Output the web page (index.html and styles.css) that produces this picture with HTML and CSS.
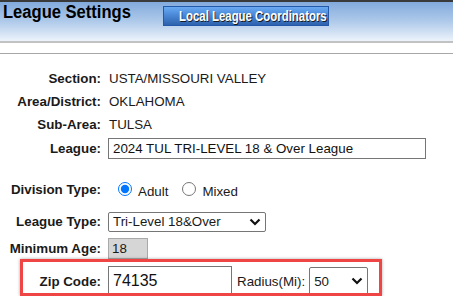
FILE: index.html
```html
<!DOCTYPE html>
<html lang="en">
<head>
<meta charset="utf-8">
<title>League Settings</title>
<link rel="stylesheet" href="styles.css">
</head>
<body>
<div class="topbar"></div>
<header class="header">
  <h1 class="title"><span class="narrow narrow-title">League Settings</span></h1>
  <button class="coord-btn" type="button"><span class="narrow">Local League Coordinators</span></button>
</header>
<div class="band"></div>
<div class="rule"></div>
<main class="form">
  <div class="info">
    <div class="label">Section:</div><div class="value">USTA/MISSOURI VALLEY</div>
    <div class="label">Area/District:</div><div class="value">OKLAHOMA</div>
    <div class="label">Sub-Area:</div><div class="value">TULSA</div>
    <div class="label label-league">League:</div>
    <div class="value value-league"><input class="league-input" type="text" value="2024 TUL TRI-LEVEL 18 &amp; Over League"></div>
  </div>
  <div class="opts">
    <div class="row row-division">
      <div class="label">Division Type:</div>
      <div class="radios">
        <label class="radio-opt"><input type="radio" name="div" checked><span>Adult</span></label>
        <label class="radio-opt"><input type="radio" name="div"><span>Mixed</span></label>
      </div>
    </div>
    <div class="row row-type">
      <div class="label">League Type:</div>
      <span class="select-wrap">
        <select class="type-select"><option>Tri-Level 18&amp;Over</option></select>
        <svg class="chev" width="12" height="8" viewBox="0 0 12 8"><path d="M1.5 1.5 L6 6 L10.5 1.5" fill="none" stroke="#111" stroke-width="2.2"/></svg>
      </span>
    </div>
    <div class="row row-age">
      <div class="label">Minimum Age:</div>
      <input class="age-input" type="text" value="18" readonly>
    </div>
    <div class="row row-zip">
      <div class="label">Zip Code:</div>
      <input class="zip-input" type="text" value="74135">
      <span class="radius-label">Radius(Mi):</span>
      <span class="select-wrap">
        <select class="radius-select"><option>50</option></select>
        <svg class="chev" width="12" height="8" viewBox="0 0 12 8"><path d="M1.5 1.5 L6 6 L10.5 1.5" fill="none" stroke="#111" stroke-width="2.2"/></svg>
      </span>
    </div>
  </div>
</main>
</body>
</html>
```
FILE: styles.css
```css
*, *::before, *::after { box-sizing: border-box; }
html, body { margin: 0; padding: 0; background: #fff; }
body {
  font-family: "Liberation Sans", Arial, sans-serif;
  font-size: 13.33px;
  color: #1a1a1a;
  width: 453px;
  overflow: hidden;
}
.topbar { height: 2px; background: #3a3a3a; }
.header {
  height: 39px;
  background: linear-gradient(to bottom, #82aadc 0%, #afcaea 50%, #edf3fb 100%);
  display: flex;
  align-items: flex-start;
}
.narrow {
  display: inline-block;
  transform: scaleX(0.815);
  transform-origin: left center;
  white-space: nowrap;
}
.narrow-title { transform: scaleX(0.92); }
.title {
  margin: 0;
  padding: 0 0 0 3px;
  width: 163px;
  font-family: "Liberation Sans", Arial, sans-serif;
  font-weight: bold;
  font-size: 18px;
  line-height: 20px;
  color: #000;
  flex: none;
}
.coord-btn {
  margin-top: 4px;
  width: 166px;
  height: 20px;
  padding: 0 0 0 15px;
  text-align: left;
  border: 1px solid #2458a8;
  background: linear-gradient(to bottom, #6aaaf2 0%, #4a88d6 45%, #2e62ad 100%);
  color: #fff;
  font-family: "Liberation Sans", Arial, sans-serif;
  font-weight: bold;
  font-size: 14px;
  line-height: 18px;
  text-shadow: 1px 1px 0 #1a1a1a;
  white-space: nowrap;
  overflow: hidden;
}
.band { height: 2px; background: #c2c2c2; }
.rule { height: 1px; margin-top: 10px; background: #a8a8a8; }

.info {
  margin-top: 13px;
  display: grid;
  grid-template-columns: 101px 1fr;
  grid-template-rows: 23px 23px 23px 25px;
  column-gap: 7px;
  align-items: center;
}
.label {
  text-align: right;
  font-weight: bold;
  color: #1a1a1a;
  white-space: nowrap;
}
.value { padding-left: 1px; color: #1a1a1a; }
.league-input {
  width: 318px;
  height: 21px;
  border: 1px solid #767676;
  padding: 0 0 0 4px;
  font-family: "Liberation Sans", Arial, sans-serif;
  font-size: 13.33px;
  color: #111;
  margin: 0 0 0 -1px;
}

.opts { margin-top: 18px; }
.row {
  display: flex;
  align-items: center;
}
.row .label { width: 101px; flex: none; margin-right: 7px; }
.row-division { height: 20px; }
.row-type { height: 19px; margin-top: 13px; }
.row-age { height: 21px; margin-top: 7px; }
.row-zip { height: 30px; margin-top: 7px; position: relative; }
.row-zip::after {
  content: "";
  position: absolute;
  left: 20px;
  top: -7px;
  width: 362px;
  height: 37px;
  border: 3px solid #f04545;
  box-shadow: 0 0 3px rgba(0,0,0,0.35);
  pointer-events: none;
}
.radios { display: flex; align-items: center; }
.radio-opt { display: flex; align-items: center; margin-right: 13px; color: #1a1a1a; }
.radio-opt input {
  width: 14px;
  height: 14px;
  margin: 0 6px 0 10px;
}
.radio-opt + .radio-opt input { margin-left: 1px; }
.radio-opt span { position: relative; top: 2px; }

.select-wrap { position: relative; display: inline-flex; }
.chev { position: absolute; right: 5px; top: 50%; margin-top: -4px; pointer-events: none; }
.type-select, .radius-select {
  -webkit-appearance: none;
  appearance: none;
  font-family: "Liberation Sans", Arial, sans-serif;
  font-size: 13.33px;
  color: #1a1a1a;
  border: 1px solid #767676;
  border-radius: 2px;
  background: #fff;
  margin: 0;
  padding: 0 0 0 4px;
}
.type-select { width: 158px; height: 20px; }
.age-input {
  width: 40px;
  height: 21px;
  border: 1px solid #a9a9a9;
  background: #d6d6d6;
  padding: 0 0 0 3px;
  font-family: "Liberation Sans", Arial, sans-serif;
  font-size: 13.33px;
  color: #1a1a1a;
  margin: 0;
}
.zip-input {
  width: 124px;
  height: 30px;
  border: 1px solid #767676;
  padding: 0 0 0 4px;
  font-family: "Liberation Sans", Arial, sans-serif;
  font-size: 16px;
  color: #111;
  margin: 0;
}
.radius-label { margin-left: 5px; margin-right: 4px; color: #1a1a1a; }
.radius-select { width: 59px; height: 29px; }
```
